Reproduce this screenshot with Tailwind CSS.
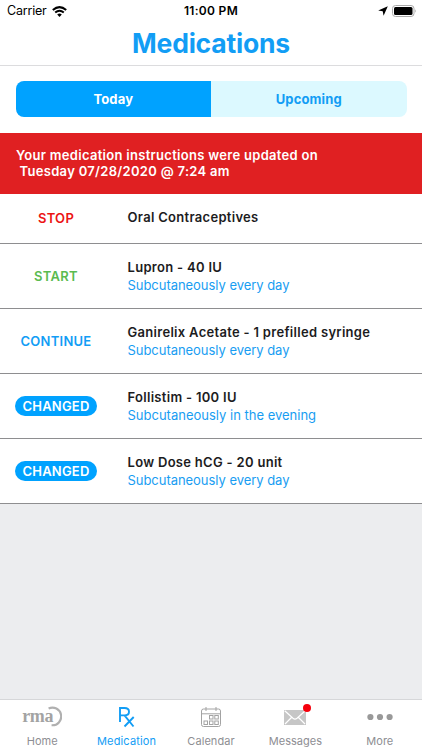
<!DOCTYPE html>
<html lang="en">
<head>
<meta charset="utf-8">
<title>Medications</title>
<script src="https://cdn.jsdelivr.net/npm/@tailwindcss/browser@4"></script>
</head>
<body class="w-[422px] h-[750px] overflow-hidden flex flex-col bg-[#ecedef] font-[Inter,sans-serif] text-[#1c1c1e]">
<header class="h-[66px] shrink-0 bg-white border-b border-[#dcdcde] flex flex-col">
  <div class="h-[22px] grid grid-cols-3 items-center text-[12.5px] text-black leading-[22px]">
    <div class="flex items-center gap-[5px] pl-[7px]"><span class="-tracking-[0.2px]">Carrier</span>
      <svg class="w-[15px] h-[11px]" viewBox="0 0 15 11" fill="none" stroke="#000"><path d="M.8 4Q7.500-1.800 14.200 4" stroke-width="2"/><path d="M3.200 6.600Q7.500 3 11.800 6.600" stroke-width="2"/><path d="M5.200 8.500Q7.500 6.600 9.800 8.500L7.500 10.900Z" fill="#000" stroke="none"/></svg>
    </div>
    <div class="text-center font-semibold text-[12px] tracking-[0.3px]">11:00 PM</div>
    <div class="flex items-center justify-end gap-[4px] pr-[5px]">
      <svg class="w-[10px] h-[10px]" viewBox="0 0 10 10"><path d="M9.800.2L5.600 9.800L4.700 5.300L.2 4.400Z"/></svg>
      <svg class="w-[25px] h-[12px]" viewBox="0 0 25 12"><rect x=".5" y=".5" width="21.500" height="11" rx="3" fill="#fff" stroke="#aaa"/><rect x="2" y="2" width="18.500" height="8" rx="1.500"/><path d="M23.300 4.200Q25 6 23.300 7.800Z" fill="#aaa"/></svg>
    </div>
  </div>
  <h1 class="text-center text-[26.5px] leading-[42px] font-bold -tracking-[0.2px] text-[#129df5]">Medications</h1>
</header>
<div class="h-[67px] shrink-0 bg-white px-[15.5px] pt-[15px]">
  <div class="h-[36px] grid grid-cols-2 rounded-[8px] overflow-hidden text-center text-[13px] leading-[36px] font-bold tracking-[0.15px]">
    <div class="bg-[#00a2ff] text-white">Today</div>
    <div class="bg-[#dcf9ff] text-[#129df5]">Upcoming</div>
  </div>
</div>
<div class="h-[61px] shrink-0 bg-[#e02022] text-white px-[16px] pt-[15px] text-[13px] leading-[15.500px] font-semibold whitespace-pre tracking-[0.3px]">Your medication instructions were updated on
 Tuesday 07/28/2020 @ 7:24 am</div>
<main class="shrink-0 bg-white text-[13px] leading-[18px]">
  <div class="h-[50px] flex items-center border-b border-[#8e8e90]"><div class="w-[112px] pb-[2px] text-center font-semibold tracking-[0.3px] text-[#ec1414]">STOP</div><div class="pl-[15.500px] pb-[4px] font-semibold tracking-[0.3px]">Oral Contraceptives</div></div>
  <div class="h-[65px] flex items-center border-b border-[#8e8e90]"><div class="w-[112px] text-center font-semibold tracking-[0.3px] text-[#5abb50]">START</div><div class="pl-[15.500px]"><p class="font-semibold tracking-[0.3px]">Lupron - 40 IU</p><p class="-tracking-[0.04px] text-[#189df2]">Subcutaneously every day</p></div></div>
  <div class="h-[65px] flex items-center border-b border-[#8e8e90]"><div class="w-[112px] text-center font-semibold tracking-[0.25px] text-[#129df5]">CONTINUE</div><div class="pl-[15.500px]"><p class="font-semibold tracking-[0.3px]">Ganirelix Acetate - 1 prefilled syringe</p><p class="-tracking-[0.04px] text-[#189df2]">Subcutaneously every day</p></div></div>
  <div class="h-[65px] flex items-center border-b border-[#8e8e90]"><div class="w-[112px] flex justify-center"><span class="w-[82px] h-[20px] rounded-full bg-[#00a2ff] text-white text-center leading-[20px] font-semibold tracking-[0.2px]">CHANGED</span></div><div class="pl-[15.500px]"><p class="font-semibold tracking-[0.3px]">Follistim - 100 IU</p><p class="text-[#189df2]">Subcutaneously in the evening</p></div></div>
  <div class="h-[65px] flex items-center border-b border-[#8e8e90]"><div class="w-[112px] flex justify-center"><span class="w-[82px] h-[20px] rounded-full bg-[#00a2ff] text-white text-center leading-[20px] font-semibold tracking-[0.2px]">CHANGED</span></div><div class="pl-[15.500px]"><p class="font-semibold tracking-[0.3px]">Low Dose hCG - 20 unit</p><p class="-tracking-[0.04px] text-[#189df2]">Subcutaneously every day</p></div></div>
</main>
<nav class="mt-auto h-[51px] shrink-0 bg-white border-t border-[#d6d7d9] grid grid-cols-5 text-[11px] leading-[14px] text-[#8e8e93] text-center">
  <div class="flex flex-col items-center pt-[6px]">
    <div class="h-[22px] flex"><span class="font-['Liberation_Serif',serif] font-bold text-[18px] leading-[20px] text-[#a3a3a3] -tracking-[0.3px]">rma</span><svg class="w-[14px] h-[21px] -ml-[5px]" viewBox="0 0 14 21" fill="none" stroke="#b0b0b0" stroke-width="2.200"><path d="M.6 2.500A8.800 8.800 0 1 1 3.600 19.200"/></svg></div>
    <span class="mt-[6px]">Home</span></div>
  <div class="flex flex-col items-center pt-[6px] text-[#129df5]">
    <svg class="w-[18px] h-[22px]" viewBox="0 0 18 22" fill="none" stroke="#129df5" stroke-width="1.900"><path d="M2 16V2H6.500Q11 2 11 5.700T6.500 9.400H2M6.500 9.400L15.500 20.500M15.700 11L6.500 20.500"/></svg>
    <span class="mt-[6px] tracking-[0.15px]">Medication</span></div>
  <div class="flex flex-col items-center pt-[6px]">
    <svg class="w-[22px] h-[22px]" viewBox="0 0 22 22" fill="none" stroke="#a3a3a3"><rect x="1.500" y="3" width="19" height="17.500" rx="2"/><path d="M1.500 7.800H20.500M6 1V5M16 1V5"/><g stroke-width="1"><rect x="9.500" y="9.500" width="3.500" height="3.500"/><rect x="14.800" y="9.500" width="3.500" height="3.500"/><rect x="4" y="15" width="3.500" height="3.500"/><rect x="9.500" y="15" width="3.500" height="3.500"/><rect x="14.800" y="15" width="3.500" height="3.500"/></g></svg>
    <span class="mt-[6px] tracking-[0.05px]">Calendar</span></div>
  <div class="flex flex-col items-center pt-[6px]">
    <div class="relative h-[22px] pt-[4px]"><svg class="w-[22px] h-[15px]" viewBox="0 0 22 15"><path fill="#c6c6c6" d="M0 0H22V15H0Z"/><path d="M.7.8L9 8.300Q11 10 13 8.300L21.300.8M1 14L7.500 7.500M21 14L14.500 7.500" fill="none" stroke="#fff" stroke-width="1.200"/></svg><i class="absolute left-[19px] -top-[2px] size-[8px] rounded-full bg-[#f5000c]"></i></div>
    <span class="mt-[6px]">Messages</span></div>
  <div class="flex flex-col items-center pt-[6px]">
    <svg class="w-[26px] h-[22px]" viewBox="0 0 26 22" fill="#999"><circle cx="3.400" cy="11" r="3.100"/><circle cx="13" cy="11" r="3.100"/><circle cx="22.600" cy="11" r="3.100"/></svg>
    <span class="mt-[6px]">More</span></div>
</nav>
</body>
</html>
